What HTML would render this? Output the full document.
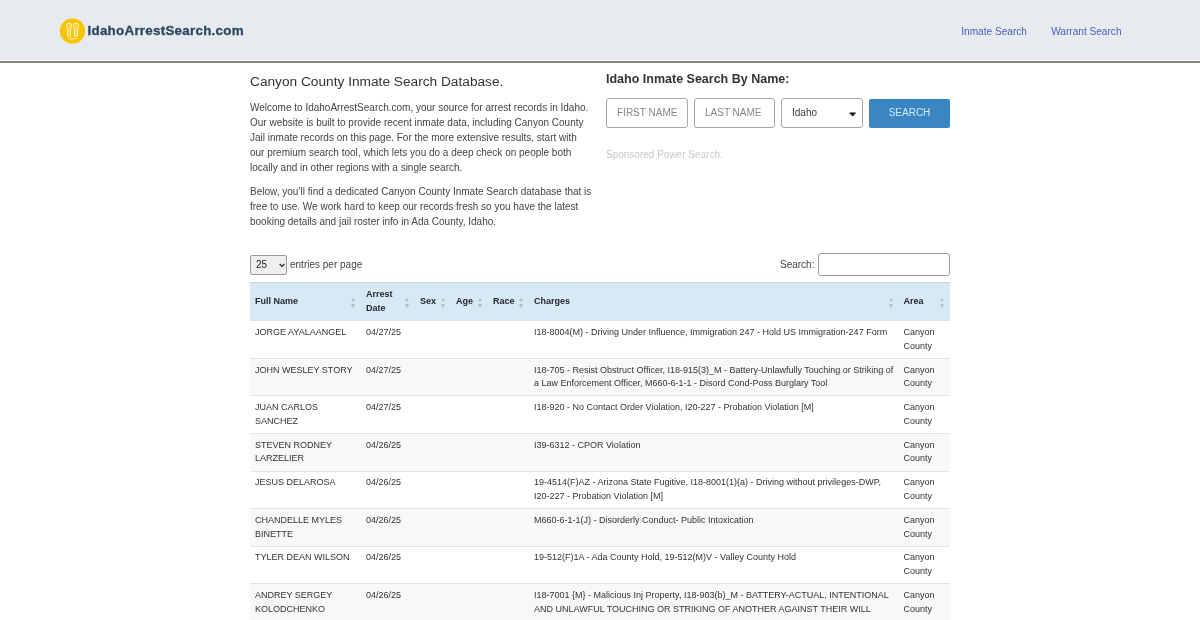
<!DOCTYPE html>
<html><head><meta charset="utf-8">
<style>
*{box-sizing:border-box;margin:0;padding:0}
html,body{will-change:transform;width:1200px;height:620px;overflow:hidden;background:#fff;font-family:"Liberation Sans",sans-serif;color:#333}
.hdr{position:absolute;left:0;top:0;width:1200px;height:60px;background:#e7ebf0}
.hdrline{position:absolute;left:0;top:61px;width:1200px;height:2px;background:#858585}
.logo{position:absolute;left:60px;top:18px;width:26px;height:26px;border-radius:50%;background:#f7c315}
.logotxt{position:absolute;left:87.5px;top:22.7px;font-weight:bold;font-size:13.4px;letter-spacing:0.25px;-webkit-text-stroke:0.3px #2d4760;color:#2d4760;white-space:nowrap}
.nav{position:absolute;top:25.7px;font-size:10.1px;color:#4a5cbf;white-space:nowrap}
.h1{position:absolute;left:250px;top:74px;font-size:13.7px;color:#333;white-space:nowrap}
.p{position:absolute;left:250px;width:343px;font-size:10px;line-height:15px;color:#444}
.h3{position:absolute;left:606px;top:71.5px;font-size:12.5px;font-weight:bold;color:#333;white-space:nowrap}
.inp{position:absolute;top:98px;height:30px;border:1px solid #a8a8a8;border-radius:3px;background:#fff;font-size:10px;color:#888;padding-left:10px;line-height:28px;white-space:nowrap}
.btn{position:absolute;left:869px;top:99px;width:81px;height:29px;background:#3986c0;border-radius:2px;color:#d2eaff;font-size:10px;text-align:center;line-height:27.6px}
.spons{position:absolute;left:606px;top:149px;font-size:10px;color:#c8c8c8;white-space:nowrap}
.sel25{position:absolute;left:250px;top:255px;width:37px;height:20px;border:1px solid #999;border-radius:2px;background:#efefef;font-size:10px;color:#222;padding-left:5px;line-height:18px}
.ent{position:absolute;left:290px;top:259px;font-size:10px;color:#444;white-space:nowrap}
.slab{position:absolute;left:780px;top:259px;font-size:10px;color:#444;white-space:nowrap}
.sinp{position:absolute;left:817.5px;top:253.3px;width:132.5px;height:22.5px;border:1px solid #9a9a9a;border-radius:3px;background:#fff}
table{position:absolute;left:250px;top:282px;width:700px;border-collapse:collapse;table-layout:fixed}
th{background:#d7e9f5;font-size:9px;font-weight:bold;text-align:left;color:#1f2428;padding:0 5px;height:38.3px;line-height:13.7px;border-top:1px solid #c9d3da;position:relative}
th .sa{position:absolute;right:5.6px;top:14.7px;width:4px;height:10.3px}
th .sa:before{content:"";position:absolute;left:0;top:0;border-left:2px solid transparent;border-right:2px solid transparent;border-bottom:3.3px solid #b4bcc2}
th .sa:after{content:"";position:absolute;left:0;top:6.3px;border-left:2px solid transparent;border-right:2px solid transparent;border-top:4px solid #b4bcc2}
td{font-size:9px;color:#333;padding:4.8px 5px 0 5px;height:37.57px;vertical-align:top;line-height:13.7px;border-top:1px solid #e4e4e4}
td.c6{padding-right:4px}
tr.o td{background:#f8f8f8}
</style></head><body>
<div class="hdr"></div>
<div class="hdrline"></div>
<svg style="position:absolute;left:59px;top:17px" width="28" height="28" viewBox="0 0 28 28">
<circle cx="13.5" cy="14" r="12.6" fill="#f8c300" stroke="#fad34a" stroke-width="0.5"/>
<g fill="#fbe08a" fill-opacity="0.3" stroke="#feedb5" stroke-width="1.05">
<path d="M8.2 11.2 C6.8 9.6 7 6.2 10 6.2 C13 6.2 13.2 9.6 11.8 11.2 L11.4 19.3 L8.6 19.3 Z"/>
<path d="M15.2 11.2 C13.8 9.6 14 6.2 17 6.2 C20 6.2 20.2 9.6 18.8 11.2 L18.4 19.3 L15.6 19.3 Z"/>
</g>
<g fill="none" stroke="#fde9a6" stroke-width="0.8">
<path d="M10 8.8 L10 17.8 M17 8.8 L17 17.8"/>
</g>
<path d="M9.6 21.7 L17.1 21.7" stroke="#fde9a6" stroke-width="1.3"/>
</svg>
<div class="logotxt">IdahoArrestSearch.com</div>
<div class="nav" style="left:961.3px">Inmate Search</div>
<div class="nav" style="left:1051.2px">Warrant Search</div>

<div class="h1">Canyon County Inmate Search Database.</div>
<div class="p" style="top:100px">Welcome to IdahoArrestSearch.com, your source for arrest records in Idaho. Our website is built to provide recent inmate data, including Canyon County Jail inmate records on this page. For the more extensive results, start with our premium search tool, which lets you do a deep check on people both locally and in other regions with a single search.</div>
<div class="p" style="top:184px">Below, you’ll find a dedicated Canyon County Inmate Search database that is free to use. We work hard to keep our records fresh so you have the latest booking details and jail roster info in Ada County, Idaho.</div>

<div class="h3">Idaho Inmate Search By Name:</div>
<div class="inp" style="left:606px;width:82px">FIRST NAME</div>
<div class="inp" style="left:694px;width:81px">LAST NAME</div>
<div class="inp" style="left:781px;width:81.5px;color:#3a3a3a">Idaho</div>
<svg style="position:absolute;left:848px;top:111px" width="10" height="7" viewBox="0 0 10 7"><path d="M1.7 1.9 L7.5 1.9 L4.6 5.1 Z" fill="#1a1a1a" stroke="#1a1a1a" stroke-width="0.9" stroke-linejoin="round"/></svg>
<div class="btn">SEARCH</div>
<div class="spons">Sponsored Power Search.</div>

<div class="sel25">25<svg style="position:absolute;left:28px;top:7px" width="6" height="5" viewBox="0 0 6 5"><path d="M0.6 0.9 L3 3.4 L5.4 0.9" fill="none" stroke="#222" stroke-width="1.3"/></svg></div>
<div class="ent">entries per page</div>
<div class="slab">Search:</div>
<div class="sinp"></div>

<table>
<colgroup><col style="width:111px"><col style="width:54px"><col style="width:36px"><col style="width:37px"><col style="width:41px"><col style="width:369.5px"><col style="width:51.5px"></colgroup>
<thead><tr><th>Full Name<i class="sa"></i></th><th>Arrest<br>Date<i class="sa"></i></th><th>Sex<i class="sa"></i></th><th>Age<i class="sa"></i></th><th>Race<i class="sa"></i></th><th>Charges<i class="sa"></i></th><th>Area<i class="sa"></i></th></tr></thead>
<tbody>
<tr><td>JORGE AYALAANGEL</td><td>04/27/25</td><td></td><td></td><td></td><td class="c6">I18-8004(M) - Driving Under Influence, Immigration 247 - Hold US Immigration-247 Form</td><td>Canyon County</td></tr>
<tr class="o"><td>JOHN WESLEY STORY</td><td>04/27/25</td><td></td><td></td><td></td><td class="c6">I18-705 - Resist Obstruct Officer, I18-915(3)_M - Battery-Unlawfully Touching or Striking of a Law Enforcement Officer, M660-6-1-1 - Disord Cond-Poss Burglary Tool</td><td>Canyon County</td></tr>
<tr><td>JUAN CARLOS SANCHEZ</td><td>04/27/25</td><td></td><td></td><td></td><td class="c6">I18-920 - No Contact Order Violation, I20-227 - Probation Violation [M]</td><td>Canyon County</td></tr>
<tr class="o"><td>STEVEN RODNEY LARZELIER</td><td>04/26/25</td><td></td><td></td><td></td><td class="c6">I39-6312 - CPOR Violation</td><td>Canyon County</td></tr>
<tr><td>JESUS DELAROSA</td><td>04/26/25</td><td></td><td></td><td></td><td class="c6">19-4514(F)AZ - Arizona State Fugitive, I18-8001(1)(a) - Driving without privileges-DWP, I20-227 - Probation Violation [M]</td><td>Canyon County</td></tr>
<tr class="o"><td>CHANDELLE MYLES BINETTE</td><td>04/26/25</td><td></td><td></td><td></td><td class="c6">M660-6-1-1(J) - Disorderly Conduct- Public Intoxication</td><td>Canyon County</td></tr>
<tr><td>TYLER DEAN WILSON</td><td>04/26/25</td><td></td><td></td><td></td><td class="c6">19-512(F)1A - Ada County Hold, 19-512(M)V - Valley County Hold</td><td>Canyon County</td></tr>
<tr class="o"><td>ANDREY SERGEY KOLODCHENKO</td><td>04/26/25</td><td></td><td></td><td></td><td class="c6">I18-7001 {M} - Malicious Inj Property, I18-903(b)_M - BATTERY-ACTUAL, INTENTIONAL AND UNLAWFUL TOUCHING OR STRIKING OF ANOTHER AGAINST THEIR WILL</td><td>Canyon County</td></tr>
</tbody>
</table>
</body></html>
